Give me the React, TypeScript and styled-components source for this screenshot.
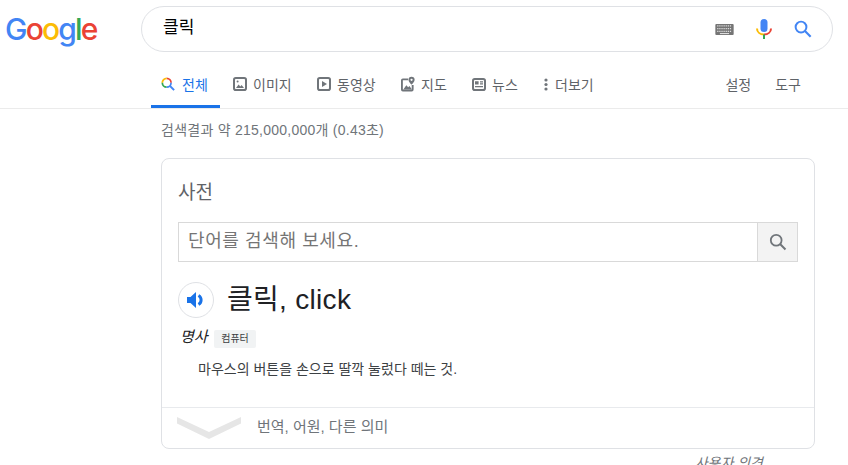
import React from 'react';
import styled, { createGlobalStyle } from 'styled-components';

const KR = `Arial, "Liberation Sans", "Noto Sans CJK KR", sans-serif`;

const GlobalStyle = createGlobalStyle`
  html, body {
    margin: 0;
    padding: 0;
    height: 465px;
    overflow: hidden;
    background: #fff;
    font-family: ${KR};
  }
`;

const TABS = [
  { label: '이미지', icon: 'image', width: 84 },
  { label: '동영상', icon: 'video', width: 84 },
  { label: '지도', icon: 'map', width: 71 },
  { label: '뉴스', icon: 'news', width: 72 },
  { label: '더보기', icon: 'more', width: 70 },
];

const TabIcon = ({ name }: { name: string }) => {
  if (name === 'image')
    return (
      <svg width="14" height="14" viewBox="0 0 14 14">
        <rect x="1" y="1" width="12" height="12" rx="1.8" fill="none" stroke="#70757a" strokeWidth="2" />
        <path d="M3 11 5.6 7.4l1.7 2.1 1.3-1.4L11 11z" fill="#70757a" />
        <circle cx="4.6" cy="4.6" r="1" fill="#70757a" />
      </svg>
    );
  if (name === 'video')
    return (
      <svg width="14" height="14" viewBox="0 0 14 14">
        <rect x="1" y="1" width="12" height="12" rx="1.8" fill="none" stroke="#70757a" strokeWidth="2" />
        <path d="M5 4v6l5-3z" fill="#70757a" />
      </svg>
    );
  if (name === 'map')
    return (
      <svg width="15" height="16" viewBox="0 0 15 16">
        <path d="M7.5 3H2a1 1 0 0 0-1 1v10a1 1 0 0 0 1 1h9.5a1 1 0 0 0 1-1V9" fill="none" stroke="#70757a" strokeWidth="2" />
        <path d="M2.5 14l3.2-4.6 2 2.2 1.3-1.4 2.2 3v.8z" fill="#70757a" />
        <path d="M11.3.2A3.3 3.3 0 0 0 8 3.5c0 2.4 3.3 5.3 3.3 5.3s3.3-2.9 3.3-5.3A3.3 3.3 0 0 0 11.3.2zm0 4.5a1.2 1.2 0 1 1 0-2.4 1.2 1.2 0 0 1 0 2.4z" fill="#70757a" />
      </svg>
    );
  if (name === 'news')
    return (
      <svg width="14" height="13" viewBox="0 0 14 13">
        <rect x="1" y="1" width="12" height="11" rx="1.8" fill="none" stroke="#70757a" strokeWidth="2" />
        <path d="M3 3.2h3.6v3.2H3zM8 3.2h3v1.2H8zM8 5.3h3v1.1H8zM3 8h8v1.3H3z" fill="#70757a" />
      </svg>
    );
  return (
    <svg width="4" height="13" viewBox="0 0 4 13">
      <circle cx="2" cy="2" r="1.6" fill="#70757a" />
      <circle cx="2" cy="6.5" r="1.6" fill="#70757a" />
      <circle cx="2" cy="11" r="1.6" fill="#70757a" />
    </svg>
  );
};

const App = () => (
  <Page>
    <GlobalStyle />
    <Header>
      <TopRow>
        <Logo>
          <LogoLetter $c="#4285f4">G</LogoLetter>
          <LogoLetter $c="#ea4335">o</LogoLetter>
          <LogoLetter $c="#fbbc05">o</LogoLetter>
          <LogoLetter $c="#4285f4">g</LogoLetter>
          <LogoLetter $c="#34a853">l</LogoLetter>
          <LogoLetter $c="#ea4335">e</LogoLetter>
        </Logo>
        <SearchBox>
          <Query>클릭</Query>
          <svg width="19" height="11" viewBox="0 0 20 12">
            <rect width="20" height="12" rx="1" fill="#757575" />
            <path d="M2 2h16M2 5h16" stroke="#ddd" strokeWidth="1.4" strokeDasharray="1.4 .9" />
            <path d="M2 8h16" stroke="#ddd" strokeWidth="1.4" strokeDasharray="1.4 .9" />
            <path d="M5 10.4h10" stroke="#ddd" strokeWidth="1.2" />
          </svg>
          <MicIcon width="16" height="21" viewBox="0 0 16 21">
            <rect x="4.5" y="0" width="7" height="13" rx="3.5" fill="#4285f4" />
            <path d="M1 9.5c0 3.6 3 6 7 6" fill="none" stroke="#fbbc05" strokeWidth="2" />
            <path d="M8 15.5c4 0 7-2.4 7-6" fill="none" stroke="#ea4335" strokeWidth="2" />
            <path d="M7 15.5h2V20H7z" fill="#34a853" />
          </MicIcon>
          <svg width="18" height="18" viewBox="0 0 20 20">
            <circle cx="7.8" cy="7.8" r="6" fill="none" stroke="#4285f4" strokeWidth="2.2" />
            <path d="M12.2 12.2 18.5 18.5" stroke="#4285f4" strokeWidth="2.4" />
          </svg>
        </SearchBox>
      </TopRow>
      <TabRow>
        <ActiveTab>
          <svg width="14" height="14" viewBox="0 0 16 16">
            <path d="M6.5 1.5a5 5 0 0 1 5 5" fill="none" stroke="#ea4335" strokeWidth="2" />
            <path d="M1.5 6.5a5 5 0 0 1 5-5" fill="none" stroke="#fbbc05" strokeWidth="2" />
            <path d="M6.5 11.5a5 5 0 0 1-5-5" fill="none" stroke="#34a853" strokeWidth="2" />
            <path d="M11.5 6.5a5 5 0 0 1-5 5" fill="none" stroke="#4285f4" strokeWidth="2" />
            <path d="M10 10l5 5" stroke="#4285f4" strokeWidth="2.2" />
          </svg>
          전체
        </ActiveTab>
        {TABS.map(tab => (
          <Tab key={tab.label} $w={tab.width}>
            <IconSlot $w={tab.icon === 'more' ? 5 : 14}>
              <TabIcon name={tab.icon} />
            </IconSlot>
            {tab.label}
          </Tab>
        ))}
        <RightTabs>
          <span>설정</span>
          <span>도구</span>
        </RightTabs>
      </TabRow>
    </Header>
    <Main>
      <Stats>검색결과 약 215,000,000개 (0.43초)</Stats>
      <Card>
        <CardBody>
          <CardTitle>사전</CardTitle>
          <DictSearch>
            <DictInput>단어를 검색해 보세요.</DictInput>
            <DictButton>
              <svg width="18" height="18" viewBox="0 0 20 20">
                <circle cx="8" cy="8" r="6" fill="none" stroke="#70757a" strokeWidth="2" />
                <path d="M12.3 12.3 18.3 18.3" stroke="#70757a" strokeWidth="2.2" />
              </svg>
            </DictButton>
          </DictSearch>
          <WordRow>
            <SpeakerButton>
              <svg width="18" height="18" viewBox="0 0 18 18">
                <path d="M0 6v6h3.5L9 17V1L3.5 6z" fill="#1a73e8" />
                <path d="M11.5 4.5a5.2 5.2 0 0 1 0 9" fill="none" stroke="#1a73e8" strokeWidth="3" />
              </svg>
            </SpeakerButton>
            <Word>클릭, click</Word>
          </WordRow>
          <MetaRow>
            <Pos>명사</Pos>
            <Tag>컴퓨터</Tag>
          </MetaRow>
          <Definition>마우스의 버튼을 손으로 딸깍 눌렀다 떼는 것.</Definition>
        </CardBody>
        <CardFooter>
          <svg width="64" height="22" viewBox="0 0 64 22">
            <path d="M0 0 32 15 64 0v6.5L32 22 0 6.5z" fill="#e6e6e6" />
          </svg>
          <FooterText>번역, 어원, 다른 의미</FooterText>
        </CardFooter>
      </Card>
      <Feedback>사용자 의견</Feedback>
    </Main>
  </Page>
);

export default App;

const Page = styled.div`
  width: 848px;
  height: 465px;
  overflow: hidden;
`;

const Header = styled.header`
  height: 109px;
  box-sizing: border-box;
  border-bottom: 1px solid #ebebeb;
  display: flex;
  flex-direction: column;
`;

const TopRow = styled.div`
  display: flex;
  align-items: flex-start;
  padding: 6px 15px 0 5px;
`;

const Logo = styled.div`
  width: 136px;
  height: 46px;
  display: flex;
  align-items: center;
  font-family: Inter, sans-serif;
  font-weight: 500;
  font-size: 30px;
  letter-spacing: -1.8px;
  line-height: 46px;
`;

const LogoLetter = styled.span<{ $c: string }>`
  color: ${({ $c }) => $c};
`;

const SearchBox = styled.div`
  box-sizing: border-box;
  width: 692px;
  height: 46px;
  border: 1px solid #dfe1e5;
  border-radius: 23px;
  display: flex;
  align-items: center;
  padding: 0 20px 0 21px;
`;

const Query = styled.div`
  flex: 1;
  font-size: 17px;
  line-height: 24px;
  padding-bottom: 3px;
  color: #000;
`;

const MicIcon = styled.svg`
  margin: 0 22px;
`;

const TabRow = styled.nav`
  flex: 1;
  display: flex;
  align-items: flex-end;
  padding: 0 47px 0 151px;
  font-size: 14px;
  color: #5f6368;
`;

const ActiveTab = styled.div`
  box-sizing: border-box;
  width: 69px;
  height: 38px;
  margin-right: 13px;
  padding: 0 0 7px 10px;
  display: flex;
  align-items: center;
  gap: 7px;
  color: #1a73e8;
  border-bottom: 3px solid #1a73e8;
`;

const Tab = styled.div<{ $w: number }>`
  width: ${({ $w }) => $w}px;
  height: 38px;
  padding-bottom: 10px;
  box-sizing: border-box;
  display: flex;
  align-items: center;
  gap: 6px;
`;

const IconSlot = styled.span<{ $w: number }>`
  width: ${({ $w }) => $w}px;
  display: flex;
  flex: none;
`;

const RightTabs = styled.div`
  margin-left: auto;
  height: 38px;
  padding-bottom: 10px;
  box-sizing: border-box;
  display: flex;
  align-items: center;
  gap: 24px;
`;

const Main = styled.main`
  padding-left: 161px;
`;

const Stats = styled.div`
  height: 49px;
  padding-top: 11px;
  box-sizing: border-box;
  font-size: 14px;
  line-height: 20px;
  letter-spacing: 0.25px;
  color: #70757a;
`;

const Card = styled.section`
  box-sizing: border-box;
  width: 654px;
  height: 291px;
  border: 1px solid #dfe1e5;
  border-radius: 8px;
  display: flex;
  flex-direction: column;
`;

const CardBody = styled.div`
  flex: 1;
  padding: 0 16px;
`;

const CardTitle = styled.h2`
  margin: 0;
  padding-top: 23px;
  height: 63px;
  box-sizing: border-box;
  font-size: 19px;
  font-weight: 400;
  line-height: 22px;
  color: #5f6368;
`;

const DictSearch = styled.div`
  display: flex;
  height: 40px;
  box-sizing: border-box;
  border: 1px solid #d9d9d9;
`;

const DictInput = styled.div`
  flex: 1;
  padding-left: 9px;
  line-height: 36px;
  font-size: 18px;
  letter-spacing: 0.6px;
  color: #757575;
`;

const DictButton = styled.div`
  box-sizing: border-box;
  width: 40px;
  background: #f3f3f3;
  border-left: 1px solid #d9d9d9;
  display: flex;
  align-items: center;
  justify-content: center;
`;

const WordRow = styled.div`
  display: flex;
  align-items: center;
  gap: 13px;
  height: 36px;
  margin-top: 20px;
`;

const SpeakerButton = styled.div`
  box-sizing: border-box;
  width: 36px;
  height: 36px;
  border: 1px solid #dfe1e5;
  border-radius: 50%;
  display: flex;
  align-items: center;
  justify-content: center;
`;

const Word = styled.div`
  font-size: 28px;
  line-height: 36px;
  letter-spacing: 0.3px;
  color: #202124;
`;

const MetaRow = styled.div`
  display: flex;
  align-items: center;
  height: 18px;
  margin: 12px 0 0 2px;
`;

const Pos = styled.i`
  width: 34px;
  font-size: 15px;
  line-height: 18px;
  padding-bottom: 4px;
  color: #202124;
`;

const Tag = styled.span`
  background: #f1f3f4;
  border-radius: 2px;
  width: 42px;
  text-align: center;
  height: 18px;
  line-height: 18px;
  font-size: 10px;
  color: #3c4043;
`;

const Definition = styled.div`
  margin: 13px 0 0 20px;
  font-size: 14px;
  line-height: 16px;
  color: #3c4043;
`;

const CardFooter = styled.div`
  height: 41px;
  border-top: 1px solid #e8eaed;
  box-sizing: border-box;
  display: flex;
  align-items: center;
  gap: 16px;
  padding: 0 16px 0 15px;
`;

const FooterText = styled.span`
  font-size: 15px;
  line-height: 20px;
  padding-bottom: 3px;
  color: #70757a;
`;

const Feedback = styled.div`
  width: 654px;
  text-align: right;
  padding: 6px 52px 0 0;
  box-sizing: border-box;
  font-size: 14px;
  line-height: 16px;
  font-style: italic;
  color: #70757a;
`;
